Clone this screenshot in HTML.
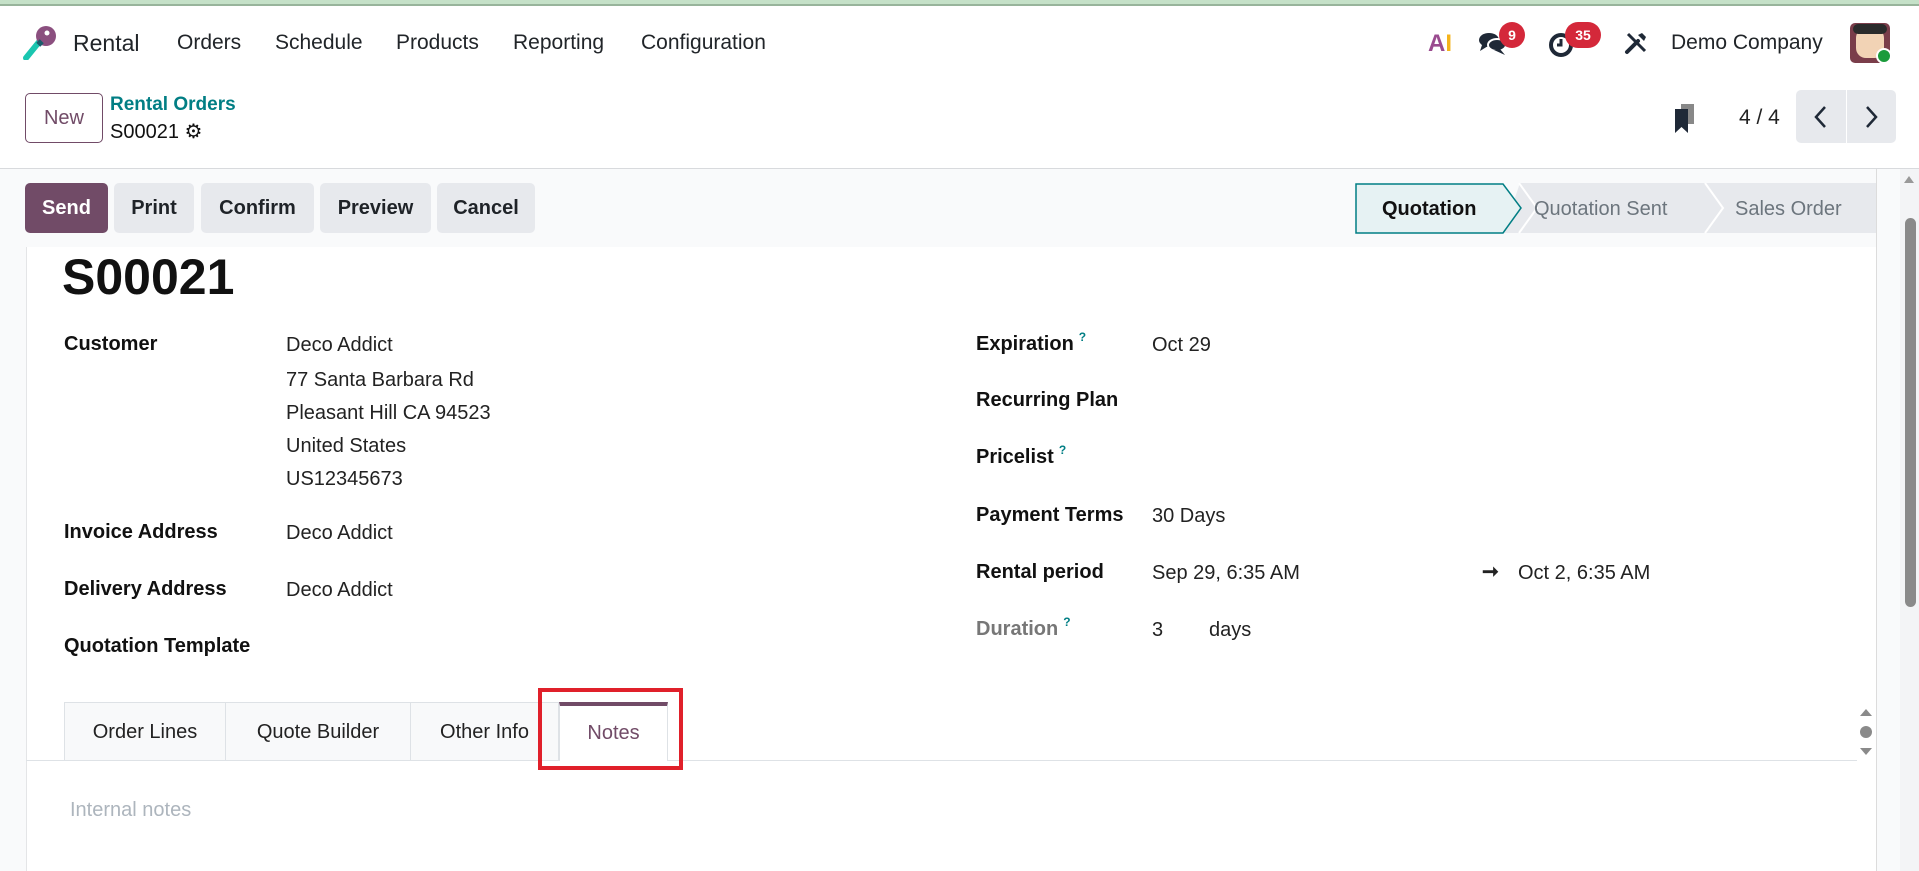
<!DOCTYPE html>
<html><head><meta charset="utf-8"><style>
*{box-sizing:border-box;margin:0;padding:0}
body{width:1919px;height:871px;overflow:hidden;background:#fff;font-family:"Liberation Sans",sans-serif;color:#1f2328;position:relative}
.a{position:absolute;white-space:nowrap}
.c{line-height:30px;height:30px;margin-top:-15px}
.nav{font-size:21px;color:#212529}
.lbl{font-size:20px;font-weight:bold;color:#111}
.val{font-size:20px;color:#222}
.btn{position:absolute;top:183px;height:50px;border-radius:5px;background:#e7e9ed;font-size:20px;font-weight:bold;line-height:50px;text-align:center;color:#1f2328}
.q{font-size:12px;color:#017e84;position:relative;top:-9px;font-weight:bold;margin-left:5px;line-height:0}
.tab{position:absolute;top:702px;height:58px;background:#f8f9fa;border:1px solid #dee2e6;border-bottom:none;font-size:20px;line-height:58px;text-align:center;color:#222}
</style></head><body>
<div class="a" style="left:0;top:0;width:1919px;height:4px;background:#c5e1c8"></div>
<div class="a" style="left:0;top:4px;width:1919px;height:2px;background:#98b49b"></div>
<svg class="a" style="left:22px;top:24px" width="38" height="36" viewBox="0 0 38 36"><path d="M4 34 L17 18" stroke="#1ac6b0" stroke-width="6" stroke-linecap="round"/><circle cx="24" cy="12" r="10" fill="#8b4f7f"/><circle cx="25" cy="9" r="2.5" fill="#fff"/><path d="M16 17 L20 21" stroke="#1a5c6b" stroke-width="5"/></svg>
<div class="a c nav" style="left:73px;top:43px;font-size:23px">Rental</div>
<div class="a c nav" style="left:177px;top:43px">Orders</div>
<div class="a c nav" style="left:275px;top:43px">Schedule</div>
<div class="a c nav" style="left:396px;top:43px">Products</div>
<div class="a c nav" style="left:513px;top:43px">Reporting</div>
<div class="a c nav" style="left:641px;top:43px">Configuration</div>
<div class="a" style="left:1428px;top:31px;font-size:24px;font-weight:bold;line-height:26px"><span style="color:#9a4b8f">A</span><span style="color:#f5b31b">I</span></div>
<svg class="a" style="left:1478px;top:30px" width="30" height="26" viewBox="0 0 30 26"><ellipse cx="11" cy="10" rx="10" ry="7" fill="#1f2937"/><path d="M4 15 L2 21 L10 16Z" fill="#1f2937"/><ellipse cx="19" cy="15" rx="9" ry="6" fill="#1f2937" stroke="#fff" stroke-width="2"/><path d="M22 19 L27 25 L16 20Z" fill="#1f2937"/></svg>
<div class="a" style="left:1499px;top:22px;width:26px;height:26px;border-radius:13px;background:#d4283a;color:#fff;font-size:14px;font-weight:bold;text-align:center;line-height:26px">9</div>
<svg class="a" style="left:1548px;top:30px" width="28" height="28" viewBox="0 0 28 28"><circle cx="13" cy="15" r="10" fill="none" stroke="#1f2937" stroke-width="4"/><path d="M13 9 V15 H9" stroke="#1f2937" stroke-width="3" fill="none"/></svg>
<div class="a" style="left:1565px;top:22px;width:36px;height:26px;border-radius:13px;background:#d4283a;color:#fff;font-size:14px;font-weight:bold;text-align:center;line-height:26px">35</div>
<svg class="a" style="left:1624px;top:31px" width="24" height="24" viewBox="0 0 24 24"><path d="M3 21 L14 10" stroke="#1f2937" stroke-width="4" stroke-linecap="round"/><path d="M4 3 L21 20" stroke="#1f2937" stroke-width="3"/><path d="M14 4 L20 10 L22 6 L18 2Z" fill="#1f2937"/></svg>
<div class="a c nav" style="left:1671px;top:43px">Demo Company</div>
<div class="a" style="left:1850px;top:23px;width:40px;height:40px;border-radius:5px;background:#7a3d4a"></div>
<div class="a" style="left:1856px;top:28px;width:28px;height:30px;border-radius:10px;background:#f2d3b5"></div>
<div class="a" style="left:1853px;top:24px;width:34px;height:10px;border-radius:6px;background:#2b2b2b"></div>
<div class="a" style="left:1876px;top:48px;width:16px;height:16px;border-radius:8px;background:#1a9b3b;border:2px solid #fff"></div>
<div class="a" style="left:25px;top:93px;width:78px;height:50px;border:1px solid #714b67;border-radius:5px;font-size:20px;color:#714b67;text-align:center;line-height:48px">New</div>
<div class="a c" style="left:110px;top:105px;font-size:19px;font-weight:bold;color:#017e84">Rental Orders</div>
<div class="a c" style="left:110px;top:132px;font-size:20px;color:#111">S00021 <span style="font-size:20px">⚙</span></div>
<svg class="a" style="left:1674px;top:104px" width="22" height="30" viewBox="0 0 22 30"><rect x="7" y="0" width="13" height="20" fill="#888"/><path d="M1 5 H14 V29 L7.5 23 L1 29Z" fill="#1f2937"/></svg>
<div class="a c" style="left:1739px;top:118px;font-size:21px;color:#222">4 / 4</div>
<div class="a" style="left:1796px;top:90px;width:100px;height:53px;background:#e7e9ed;border-radius:5px"></div>
<div class="a" style="left:1846px;top:90px;width:1px;height:53px;background:#fff"></div>
<svg class="a" style="left:1810px;top:104px" width="72" height="26" viewBox="0 0 72 26"><path d="M15 3 L6 13 L15 23" stroke="#1f2937" stroke-width="2.5" fill="none"/><path d="M57 3 L66 13 L57 23" stroke="#1f2937" stroke-width="2.5" fill="none"/></svg>
<div class="a" style="left:0;top:168px;width:1919px;height:703px;background:#f9fafb;border-top:1px solid #d8dadd"></div>
<div class="btn" style="left:25px;width:83px;background:#714b67;color:#fff">Send</div>
<div class="btn" style="left:114px;width:80px">Print</div>
<div class="btn" style="left:201px;width:113px">Confirm</div>
<div class="btn" style="left:320px;width:111px">Preview</div>
<div class="btn" style="left:437px;width:98px">Cancel</div>
<svg class="a" style="left:1355px;top:183px" width="522" height="51" viewBox="0 0 522 51"><path d="M165 0 H521 V50 H148 Z" fill="#e7e9ed"/><path d="M164 0 L182 25 L164 50" fill="none" stroke="#fff" stroke-width="2"/><path d="M350 0 L368 25 L350 50" fill="none" stroke="#fff" stroke-width="2"/><path d="M1 1 H148 L166 25 L148 50 H1Z" fill="#e6f2f3" stroke="#017e84" stroke-width="1.5"/></svg>
<div class="a c" style="left:1382px;top:209px;font-size:20px;font-weight:bold;color:#111">Quotation</div>
<div class="a c" style="left:1534px;top:209px;font-size:20px;color:#6c757d">Quotation Sent</div>
<div class="a c" style="left:1735px;top:209px;font-size:20px;color:#6c757d">Sales Order</div>
<div class="a" style="left:1876px;top:169px;width:1px;height:702px;background:#dcdcdc"></div>
<div class="a" style="left:1900px;top:169px;width:19px;height:702px;background:#f3f4f6"></div>
<svg class="a" style="left:1903px;top:174px" width="12" height="10"><path d="M1 9 L6 2 L11 9Z" fill="#999"/></svg>
<div class="a" style="left:1905px;top:218px;width:11px;height:389px;border-radius:6px;background:#8a8a8a"></div>
<div class="a" style="left:26px;top:247px;width:1850px;height:624px;background:#fff;border-left:1px solid #e4e5e7"></div>
<div class="a" style="left:62px;top:247px;font-size:50px;font-weight:bold;color:#111;line-height:60px">S00021</div>
<div class="a c lbl" style="left:64px;top:344px">Customer</div>
<div class="a c val" style="left:286px;top:345px">Deco Addict</div>
<div class="a c val" style="left:286px;top:380px">77 Santa Barbara Rd</div>
<div class="a c val" style="left:286px;top:413px">Pleasant Hill CA 94523</div>
<div class="a c val" style="left:286px;top:446px">United States</div>
<div class="a c val" style="left:286px;top:479px">US12345673</div>
<div class="a c lbl" style="left:64px;top:532px">Invoice Address</div>
<div class="a c val" style="left:286px;top:533px">Deco Addict</div>
<div class="a c lbl" style="left:64px;top:589px">Delivery Address</div>
<div class="a c val" style="left:286px;top:590px">Deco Addict</div>
<div class="a c lbl" style="left:64px;top:646px">Quotation Template</div>
<div class="a c lbl" style="left:976px;top:344px">Expiration<span class="q">?</span></div>
<div class="a c val" style="left:1152px;top:345px">Oct 29</div>
<div class="a c lbl" style="left:976px;top:400px">Recurring Plan</div>
<div class="a c lbl" style="left:976px;top:457px">Pricelist<span class="q">?</span></div>
<div class="a c lbl" style="left:976px;top:515px">Payment Terms</div>
<div class="a c val" style="left:1152px;top:516px">30 Days</div>
<div class="a c lbl" style="left:976px;top:572px">Rental period</div>
<div class="a c val" style="left:1152px;top:573px">Sep 29, 6:35 AM</div>
<div class="a c val" style="left:1482px;top:572px;font-weight:bold">➞</div>
<div class="a c val" style="left:1518px;top:573px">Oct 2, 6:35 AM</div>
<div class="a c lbl" style="left:976px;top:629px;color:#777">Duration<span class="q">?</span></div>
<div class="a c val" style="left:1152px;top:630px">3</div>
<div class="a c val" style="left:1209px;top:630px">days</div>
<div class="a" style="left:26px;top:760px;width:1831px;height:1px;background:#dee2e6"></div>
<div class="tab" style="left:64px;width:162px">Order Lines</div>
<div class="tab" style="left:225px;width:186px">Quote Builder</div>
<div class="tab" style="left:410px;width:149px">Other Info</div>
<div class="tab" style="left:559px;width:109px;background:#fff;color:#714b67;height:59px;border-top:4px solid #714b67;line-height:54px">Notes</div>
<div class="a" style="left:538px;top:688px;width:145px;height:82px;border:4px solid #e0202a"></div>
<svg class="a" style="left:1858px;top:706px" width="16" height="52"><path d="M2 10 L8 3 L14 10Z" fill="#8a8a8a"/><circle cx="8" cy="26" r="6" fill="#8a8a8a"/><path d="M2 42 L8 49 L14 42Z" fill="#8a8a8a"/></svg>
<div class="a c" style="left:70px;top:810px;font-size:20px;color:#adb5bd">Internal notes</div>
</body></html>
